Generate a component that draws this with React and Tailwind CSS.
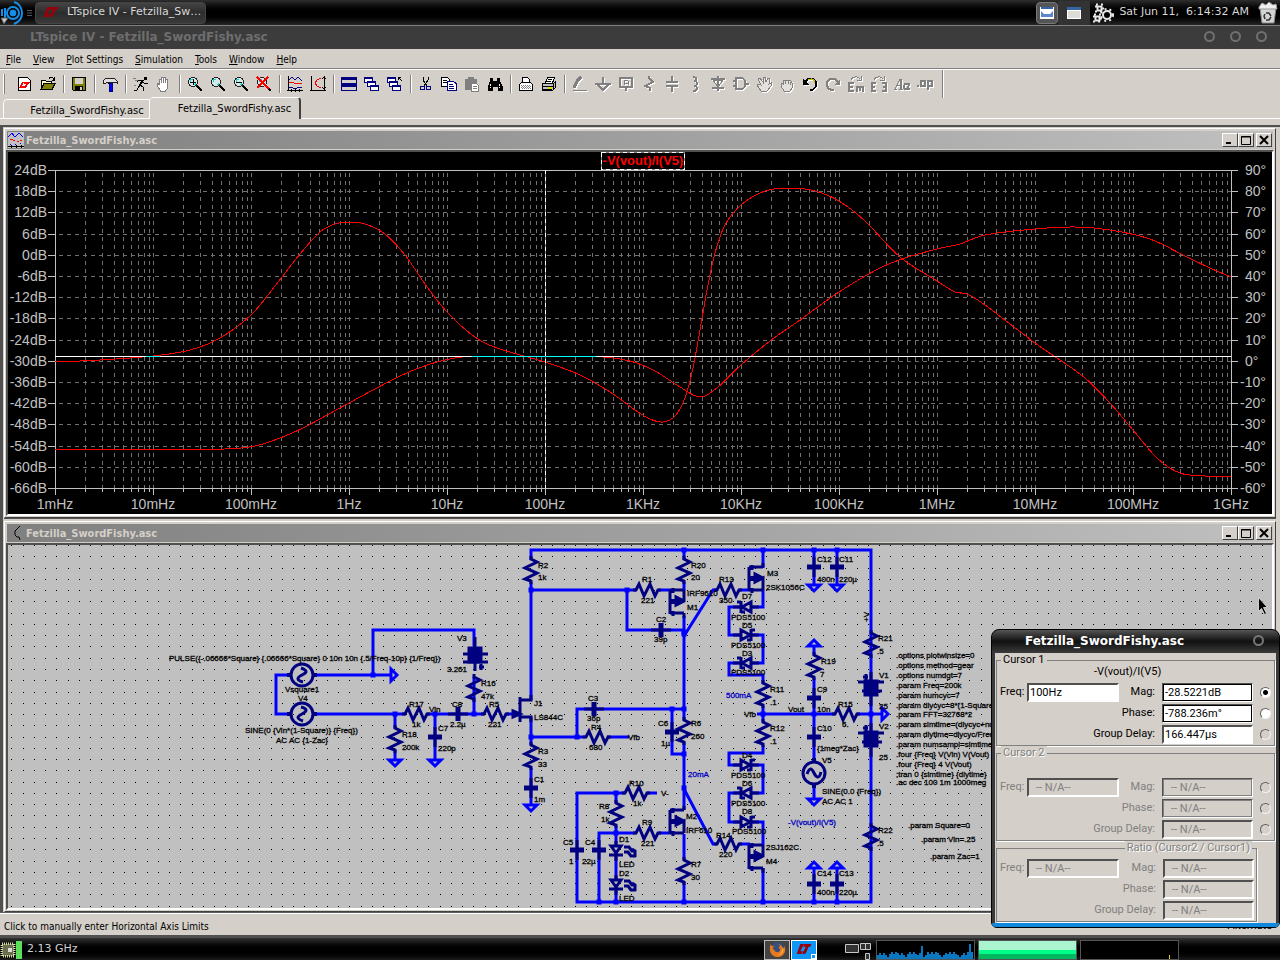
import { Fragment } from 'react';

const NAVY = '#000080';
const BLUE = '#0000ff';

/* ---------- toolbar icons ---------- */

const Magnifier = ({ children }) => (
  <>
    <circle cx="6" cy="6" r="4.5" fill="#d8e8e4" stroke="#202020" />
    <path d="M3 6a3 3 0 0 1 3-3M9 7a3 3 0 0 1-2 2" stroke="#00d8d8" />
    <path d="M10 10l5 5" stroke="#000" strokeWidth="2" />
    {children}
  </>
);

const SmallWindow = ({ x, y }) => (
  <>
    <rect x={x + 0.5} y={y + 0.5} width="8" height="5" fill="#fff" stroke={NAVY} />
    <path d={`M${x} ${y + 1}h9`} stroke={NAVY} strokeWidth="2" />
  </>
);

const icons = {
  'New schematic': (
    <>
      <path d="M1.500 1.500h9l3 3v10h-12z" fill="#fff" stroke="#000" />
      <path d="M5 6h2l-2 4h2l-1 2H2zM7 6h6l-1 2h-1l-2 4H6l3-4H7z" fill="#f00" />
    </>
  ),
  Open: (
    <>
      <path d="M1 13V4h4l1 1h5v3" fill="#ffffc0" stroke="#000" />
      <path d="M1 13.500l3-6h11l-3 6z" fill="#808000" stroke="#000" />
      <path d="M9 2.500c2-2 4-1 5 1M14.500 1v3h-3" stroke="#000" />
    </>
  ),
  Save: (
    <>
      <path d="M1.500 1.500h13v13h-12l-1-1z" fill="#808000" stroke="#000" />
      <rect x="4" y="2" width="8" height="6" fill="#d4cfc8" />
      <rect x="4" y="10" width="8" height="5" fill="#000" />
      <rect x="9" y="11" width="2" height="3" fill="#d4cfc8" />
    </>
  ),
  'Control panel': (
    <>
      <path d="M6 6h4v2H6z" fill="#000" />
      <path d="M1 5l3-3h8l3 3v2l-3-1H5L3 8 1 7z" fill="#e0e0e0" stroke="#202020" />
      <path d="M7 7h3v8H7z" fill="#00f" stroke={NAVY} />
    </>
  ),
  Run: (
    <>
      <path d="M11 1h3v3h-3z" fill="#000" />
      <path d="M11 4L7 9l3 2v4M7 9l-3 5H1M10 4H6L4 6M10 6l2 2 3-1" stroke="#000" />
      <path d="M10 4L7 9" stroke="#000" strokeWidth="2" />
      <path d="M0 2h3M2 4h3M1 9h2" stroke="#808080" />
    </>
  ),
  Halt: (
    <path d="M4.500 15L1.500 10V7.500l2 1V3h2v4V1.500h2V7 1.500h2V7 3h2v9l-2 3z" fill="#fff" stroke="#808080" />
  ),
  'Zoom in': <Magnifier><path d="M3 6h6M6 3v6" stroke="#000" /></Magnifier>,
  Pan: <Magnifier />,
  'Zoom out': <Magnifier><path d="M3 6h6" stroke="#000" /></Magnifier>,
  'Zoom full extents': <Magnifier><path d="M1 1l12 12M12 1L1 12" stroke="#f00" strokeWidth="2" /></Magnifier>,
  Autorange: (
    <>
      <path d="M1.500 0v15M0 14.500h16M4 13v3M8 13v3M12 13v3" stroke="#000" />
      <path d="M2 4l3-3 3 3 3-3 4 4M2 11l4 1h4l5-1" stroke={NAVY} />
      <path d="M2 7l3-1 4 2 3-1 3 1" stroke="#f00" />
    </>
  ),
  'Fit vertical': (
    <>
      <path d="M1.500 0v15M0 14.500h16M14.500 1v12M12 3l2.500-2 1.500 2M12 11l2.500 2 1.500-2" stroke="#000" />
      <path d="M11 2L7 4 5 7l2 3 4 2" stroke="#f00" />
    </>
  ),
  'Tile windows': (
    <>
      <rect x="0.500" y="1.500" width="15" height="6" fill="#d4cfc8" stroke={NAVY} />
      <rect x="0.500" y="8.500" width="15" height="6" fill="#d4cfc8" stroke={NAVY} />
      <path d="M0 2.500h16M0 9.500h16" stroke={NAVY} strokeWidth="3" />
    </>
  ),
  Cascade: (
    <>
      <SmallWindow x={0} y={1} />
      <SmallWindow x={3} y={5} />
      <SmallWindow x={6} y={9} />
    </>
  ),
  'Close all': (
    <>
      <SmallWindow x={0} y={1} />
      <SmallWindow x={2} y={5} />
      <SmallWindow x={5} y={9} />
      <path d="M15 5l-4-4M11 4V1h3" stroke="#000" />
    </>
  ),
  Cut: (
    <>
      <path d="M5 1v3l4 6M10 1v3l-4 6" stroke="#000" />
      <circle cx="4.500" cy="12" r="2" stroke={NAVY} />
      <circle cx="10.500" cy="12" r="2" stroke={NAVY} />
    </>
  ),
  Copy: (
    <>
      <path d="M0.500 1.500h6l2 2v7h-8z" fill="#fff" stroke="#000" />
      <path d="M2 4.500h4M2 6.500h4" stroke="#000" />
      <path d="M6.500 5.500h6l2.500 2v7h-8.500z" fill="#fff" stroke={NAVY} />
      <path d="M8 8.500h4M8 10.500h5M8 12.500h5" stroke={NAVY} />
    </>
  ),
  Paste: (
    <>
      <path d="M1 3h12v11H1z" fill="#808080" />
      <path d="M4 1h6v3H4z" fill="#808080" />
      <path d="M7.500 7.500h5l2 2v6h-7z" fill="#fff" stroke="#808080" />
      <path d="M9 10.500h4M9 12.500h4" stroke="#808080" />
    </>
  ),
  Find: (
    <>
      <path d="M3 2h3v3h4V2h3v3l3 6v4h-5v-4H6v4H1v-4l2-6z" fill="#000" />
      <path d="M3.500 8v4M12.500 8v4" stroke="#fff" strokeDasharray="2 1" />
    </>
  ),
  'Print preview': (
    <>
      <path d="M4.500 7V1.500h5l2 2V7" fill="#fff" stroke="#000" />
      <path d="M1.500 14.500v-6l2-2h9l2 2v6z" fill="#fff" stroke="#000" />
      <path d="M3 9.500h10M4 10.500h9M3 11.500h10M4 12.500h9" stroke="#808080" strokeDasharray="1 1" />
    </>
  ),
  Print: (
    <>
      <path d="M4.500 7l2-5.500h7L11.500 7" fill="#fff" stroke="#000" />
      <path d="M7 3.500h4M6 5.500h4" stroke="#000" />
      <path d="M1.500 7.500h11l2-2v6l-3 3h-10z" fill="#c0c0c0" stroke="#000" />
      <path d="M2 10.500h10M12.500 8v6M2 13.500h9" stroke="#000" />
      <path d="M7 12h4" stroke="#e0e000" strokeWidth="2" />
    </>
  ),
  Wire: (
    <>
      <path d="M2 12L5 5l4-4" stroke="currentColor" strokeWidth="3" />
      <path d="M1 14.500h14" stroke="currentColor" />
    </>
  ),
  Ground: <path d="M8 1v6M0 7.500h16M2 8l6 6 6-6" stroke="currentColor" strokeWidth="2" />,
  'Label net': (
    <>
      <path d="M2 1.500h12v9H2zM8 11v4" stroke="currentColor" strokeWidth="2" />
      <path d="M6 9V5l1-1h2l1 1v4M6 7h4" stroke="currentColor" />
    </>
  ),
  Resistor: <path d="M8 0v2l4 4-8 4 5 2v3" stroke="currentColor" strokeWidth="2" />,
  Capacitor: <path d="M8 0v6M2 6h12M2 10h12M8 10v6" stroke="currentColor" strokeWidth="2" />,
  Inductor: <path d="M6 1c4 0 4 4 1 4 4 0 4 5 0 5 4 0 4 5-1 5" stroke="currentColor" strokeWidth="2" />,
  Diode: (
    <>
      <path d="M1 3h14M2 12h12M8 0v15" stroke="currentColor" strokeWidth="2" />
      <path d="M3 4h10l-5 7z" stroke="currentColor" />
    </>
  ),
  Component: <path d="M0 5h3M0 10h3M3 2h5c6 0 6 11 0 11H3zM12 8h4" stroke="currentColor" strokeWidth="2" />,
  Move: <path d="M5 15L1 9l2-1 2 1-3-6 2-1 3 4V1h2l1 5 2-4 2 1-1 5 2-1v3l-4 5z" fill="#e4e1dc" stroke="currentColor" />,
  Drag: <path d="M5 15L2 10V7l2 1V5l3-1 2 0 3 1 1 2v5l-2 3z M6 5v3M9 5v3M11 6v3" fill="#e4e1dc" stroke="currentColor" />,
  Undo: (
    <>
      <path d="M3 6c3-5 11-4 11 2 0 4-3 6-6 6" stroke="#000" strokeWidth="2" />
      <path d="M6 4c3-2 7-1 7 3" stroke="#c0c000" />
      <path d="M1 3v6h6z" fill="#000" />
    </>
  ),
  Redo: (
    <>
      <path d="M13 6C10 1 2 2 2 8c0 4 3 6 7 6" stroke="currentColor" strokeWidth="2" />
      <path d="M15 3v6H9z" fill="currentColor" />
    </>
  ),
  Rotate: (
    <>
      <path d="M3 4c2-4 7-4 9-1M13 0v4H9" stroke="currentColor" />
      <path d="M6 7H1v8h5M1 11h4M9 16v-5h6v5M12 11v4" stroke="currentColor" strokeWidth="2" />
    </>
  ),
  Mirror: (
    <>
      <path d="M3 4c2-4 7-4 9-1M13 0v4H9" stroke="currentColor" />
      <path d="M5 7H1v8h4M1 11h3M11 7h4v8h-4M15 11h-3" stroke="currentColor" strokeWidth="2" />
    </>
  ),
  Text: (
    <>
      <path d="M0 13.500h3M1 13L6 3h1v10M3 9.500h4M5 13.500h4" stroke="currentColor" />
      <path d="M7 3v10" stroke="currentColor" strokeWidth="2" />
      <path d="M15 7l-1 6h2M14 8c-3-1-4 1-4 3s2 3 4 1" stroke="currentColor" strokeWidth="2" />
    </>
  ),
  'SPICE directive': <path d="M0 10h2M4 5h4v5H4zM11 14V5h4v5h-4" stroke="currentColor" strokeWidth="2" />,
};

const toolGroups = [
  ['New schematic', 'Open'],
  ['Save'],
  ['Control panel'],
  ['Run', 'Halt'],
  ['Zoom in', 'Pan', 'Zoom out', 'Zoom full extents'],
  ['Autorange', 'Fit vertical'],
  ['Tile windows', 'Cascade', 'Close all'],
  ['Cut', 'Copy', 'Paste', 'Find'],
  ['Print preview', 'Print'],
  ['Wire', 'Ground', 'Label net', 'Resistor', 'Capacitor', 'Inductor', 'Diode', 'Component', 'Move', 'Drag', 'Undo', 'Redo', 'Rotate', 'Mirror', 'Text', 'SPICE directive'],
];

const Toolbar = () => (
  <div className="flex h-7 items-center border-t border-white pl-1">
    <span className="mr-2 h-5 w-px bg-[#808080] shadow-[-1px_0_0_#fff]" />
    {toolGroups.map((group, i) => (
      <Fragment key={i}>
        {i > 0 && (
          <span className="flex w-2 justify-center">
            <span className="h-[18px] w-px bg-[#808080] shadow-[1px_0_0_#fff]" />
          </span>
        )}
        {group.map((name) => (
          <button key={name} aria-label={name} className="flex w-[23px] justify-center pl-px text-[#808080]">
            <svg
              viewBox="0 0 16 16"
              className={`size-4 ${i === 9 ? 'drop-shadow-[1px_1px_0_#fff]' : ''}`}
              fill="none"
              shapeRendering="crispEdges"
            >
              {icons[name]}
            </svg>
          </button>
        ))}
      </Fragment>
    ))}
    <span className="ml-[6px] h-7 w-px bg-[#808080] shadow-[1px_0_0_#fff]" />
  </div>
);

/* ---------- desktop panels ---------- */

const LtLogo = ({ className }) => (
  <svg viewBox="0 0 16 12" className={className} fill="#990008">
    <path d="M4 0h4L4 8h3l-2 3H0z" />
    <path d="M8 0h8l-1 3h-2l-3 7-2 1H6l4-8H7z" />
  </svg>
);

const TopPanel = () => (
  <header className="flex h-[25px] items-center bg-linear-to-b from-[#2e2e2e] via-black to-[#262626] font-['DejaVu_Sans',sans-serif] text-[11px] text-[#d8d8d8]">
    <button aria-label="Main menu" className="w-6">
      <svg viewBox="0 0 24 24" className="size-6" fill="none" stroke="#1590e8">
        <circle cx="13" cy="12" r="3" fill="#1590e8" />
        <circle cx="13" cy="12" r="6" strokeWidth="2" />
        <path d="M2 8v7M5 7v10M14 1c5 1 8 6 8 11s-3 9-8 11" strokeWidth="2" />
        <path d="M1 17h7l-4 6z" fill="#c8c8c8" stroke="#555" />
      </svg>
    </button>
    <svg viewBox="0 0 6 8" className="ml-[3px] h-2 w-[5px]" stroke="#666"><path d="M0 1h6M0 4h6M0 7h6" /></svg>
    <button className="ml-[3px] flex h-[22px] w-[171px] items-center rounded-sm border border-[#444] bg-linear-to-b from-[#444] via-[#2c2c2c] to-[#3a3a3a] pl-[7px]">
      <LtLogo className="mr-2 h-[11px] w-4" />
      LTspice IV - Fetzilla_Sw…
    </button>
    <div className="ml-auto flex items-center">
      <button aria-label="Desktop 1" className="flex h-[22px] w-[22px] items-center justify-center rounded-sm border border-[#777] bg-[#555]">
        <svg viewBox="0 0 14 12" className="h-3 w-[14px]"><path d="M0 0h14v12H0z" fill="#fff" /><path d="M1 0h12v2H1z" fill="#3465a4" /><path d="M1 4l3 3h6l3-3v6H1z" fill="#5a88c8" /></svg>
      </button>
      <button aria-label="Desktop 2" className="flex h-6 w-8 items-center justify-center bg-[#333]">
        <svg viewBox="0 0 14 12" className="h-3 w-[14px]"><path d="M0 0h14v12H0z" fill="#fff" /><path d="M0 0h14v3H0z" fill="#3465a4" /><path d="M1 4h12v7H1z" fill="#dcdcd8" /></svg>
      </button>
      <svg viewBox="0 0 22 20" className="ml-[3px] h-5 w-[22px]" fill="none" stroke="#e8e8e8">
        <circle cx="14" cy="12" r="4" strokeWidth="2" />
        <circle cx="14" cy="12" r="6" strokeWidth="2" strokeDasharray="2 3" />
        <path d="M4.500 3.500h4v4h-4zM2.500 13.500h4v4h-4z" strokeWidth="2" />
        <path d="M3 1.500h7v7H3zM1 11.500h7v7H1z" strokeWidth="2" strokeDasharray="2 3" />
      </svg>
      <time className="ml-[4px] whitespace-pre">Sat Jun 11,  6:14:32 AM</time>
      <svg viewBox="0 0 20 22" className="mr-[2px] ml-[9px] h-[22px] w-5">
        <path d="M2 6l2 15h12l2-15z" fill="#d4d4d4" stroke="#888" />
        <path d="M1 5l3-4 4 2 3-3 4 3 3-1 1 5H1z" fill="#eee" stroke="#999" />
        <path d="M8 11h3l2 3M13 15l-2 3H8M7 17l-1-3 1-2" fill="none" stroke="#333" strokeWidth="1.500" />
      </svg>
    </div>
  </header>
);

const cpuLoad = Array.from({ length: 48 }, (_, i) => (i === 22 ? 13 : i === 46 ? 15 : i % 9 === 5 ? 2 : 4 + ((i * 7 + (i % 5) * 3) % 4)));

const BottomPanel = () => (
  <footer className="flex h-6 items-center bg-linear-to-b from-[#333] via-black to-[#262626] font-['DejaVu_Sans',sans-serif] text-[11px] text-[#d0d0d0]">
    <svg viewBox="0 0 24 20" className="mr-[3px] h-5 w-6">
      <path d="M2 4h12v12H2z" fill="#6f7350" stroke="#d8d8a0" strokeWidth="3" strokeDasharray="1 1" />
      <path d="M3 5h10v10H3z" fill="#6a6e50" />
      <path d="M8 8h4v4H8z" fill="#ddd" />
      <path d="M16 1h6v18h-6z" fill="#5ae05a" />
    </svg>
    2.13 GHz
    <div className="ml-auto flex items-center">
      <button aria-label="Firefox" className="flex h-5 w-[26px] items-center justify-center border border-[#bbb] bg-[#444]">
        <svg viewBox="0 0 18 18" className="size-[17px]">
          <circle cx="9" cy="8" r="7" fill="#35507a" />
          <path d="M2 3c-3 6 0 14 7 14s10-7 7-12c0 3-1 3-1 3-1-3-3-4-5-5 2 2 2 3 0 4l2 2c0 3-5 4-6 1L4 8c0-2 1-2 2-2-2-1-4 0-4-3z" fill="#e87820" />
          <path d="M15 7c1 5-2 8-6 8 5-1 4-4 6-8z" fill="#ffc040" />
        </svg>
      </button>
      <button aria-label="LTspice" className="ml-px flex h-5 w-[26px] items-end border border-white bg-[#0e96f8] pl-1">
        <LtLogo className="mb-1 h-[11px] w-4" />
        <span className="-ml-px size-[5px] border border-white" />
      </button>
      <svg viewBox="0 0 54 20" className="mr-[5px] h-5 w-[54px]" fill="#333" stroke="#c8c8c8">
        <path d="M28.500 4.500h13v8h-13zM43.500 3.500h10v6h-10zM48.500 3.500v6M48.500 13.500h4v6h-4z" />
      </svg>
      <svg viewBox="0 0 97 18" className="h-5 w-[99px] border border-[#555] bg-black" shapeRendering="crispEdges">
        {cpuLoad.map((h, i) => (
          <path key={i} d={`M${i * 2 + 1} 18v-${h}`} stroke="#0a78c0" strokeWidth="2" />
        ))}
      </svg>
      <div className="ml-[3px] flex h-5 w-[99px] flex-col border border-[#555]">
        <span className="flex-2 bg-[#aaf5d0]" />
        <span className="flex-1 bg-[#00ff88]" />
        <span className="flex-1 bg-[#00b860]" />
      </div>
      <div className="mr-[101px] ml-[3px] flex h-5 w-[99px] items-end justify-end border border-[#555] bg-black pr-2">
        <span className="h-1 w-px bg-[#e8d020]" />
      </div>
    </div>
  </footer>
);

/* ---------- waveform plot ---------- */

const phase = [[55, 362], [100, 360], [153, 356], [190, 350], [220, 338], [251, 315], [275, 286], [300, 254], [320, 232], [335, 224], [349, 222], [365, 224], [385, 234], [405, 255], [425, 284], [447, 312], [475, 337], [500, 349], [545, 362], [580, 375], [610, 392], [635, 410], [650, 419], [663, 422], [675, 416], [685, 398], [693, 368], [700, 330], [707, 290], [715, 253], [725, 225], [741, 205], [765, 191], [790, 188], [815, 191], [839, 201], [865, 221], [900, 257], [937, 281], [955, 292], [967, 294], [985, 305], [1035, 343], [1060, 360], [1085, 378], [1110, 403], [1133, 430], [1158, 459], [1180, 473], [1205, 476], [1231, 476]];
const magnitude = [[55, 449.5], [140, 449.5], [225, 449], [255, 446], [280, 438], [305, 427], [349, 403], [400, 376], [430, 364], [455, 358], [475, 356.5], [545, 356.5], [596, 356.5], [630, 361], [655, 371], [680, 387], [700, 397], [718, 387], [741, 365], [770, 341], [800, 320], [839, 292], [880, 268], [905, 258], [937, 249], [960, 244], [985, 235], [1035, 229], [1075, 227], [1110, 230], [1150, 239], [1185, 256], [1210, 268], [1231, 277]];

// Catmull-Rom through the points, written as cubic segments
function smooth(pts) {
  let d = `M${pts[0]}`;
  for (let i = 0; i < pts.length - 1; i++) {
    const p0 = pts[i - 1] || pts[i];
    const [p1, p2] = [pts[i], pts[i + 1]];
    const p3 = pts[i + 2] || p2;
    d += `C${p1[0] + (p2[0] - p0[0]) / 6} ${p1[1] + (p2[1] - p0[1]) / 6} ${p2[0] - (p3[0] - p1[0]) / 6} ${p2[1] - (p3[1] - p1[1]) / 6} ${p2}`;
  }
  return d;
}

const decades = ['1mHz', '10mHz', '100mHz', '1Hz', '10Hz', '100Hz', '1KHz', '10KHz', '100KHz', '1MHz', '10MHz', '100MHz', '1GHz'];
const rowY = (i) => Math.round(170 + i * 21.2);

const Plot = () => (
  <svg viewBox="8 152 1264 362" className="block w-full bg-black font-['Liberation_Sans',sans-serif] text-[14px]" fill="#c0c0c0">
    <g fill="none" stroke="#707070" strokeDasharray="4 4" shapeRendering="crispEdges">
      {decades.slice(0, 12).map((_, d) =>
        [2, 3, 4, 5, 6, 7, 8, 9, 10].map((m) => {
          const x = Math.round(55 + 98 * (d + Math.log10(m))) + 0.5;
          return <path key={d + '-' + m} d={`M${x} 173V488`} />;
        })
      )}
      {Array.from({ length: 14 }, (_, i) => <path key={i} d={`M59 ${rowY(i + 1) + 0.5}H1231`} />)}
    </g>
    <g fill="none" stroke="#c0c0c0" shapeRendering="crispEdges">
      <path d="M48 170.500H1238M48 488.500H1238M55.500 170V495M1231.500 170V495" />
      {Array.from({ length: 14 }, (_, i) => <path key={i} d={`M48 ${rowY(i + 1) + 0.5}h7M1231 ${rowY(i + 1) + 0.5}h7`} />)}
      {decades.slice(0, 12).map((_, d) =>
        [2, 3, 4, 5, 6, 7, 8, 9, 10].map((m) => (
          <path key={d + '-' + m} d={`M${Math.round(55 + 98 * (d + Math.log10(m))) + 0.5} 488v${m === 10 ? 7 : 4}`} />
        ))
      )}
    </g>
    <g fill="none" stroke="#f00" shapeRendering="crispEdges">
      <path d={smooth(phase)} />
      <path d={smooth(magnitude)} />
    </g>
    <g fill="none" shapeRendering="crispEdges">
      <path d="M55 356.500H1231" stroke="#fff" />
      <path d="M146 356.500H160" stroke="#00ffff" />
      <path d="M472 356.500H596" stroke="#00ffff" />
      <path d="M545.500 170V488" stroke="#808080" />
      <path d="M545.500 170V488" stroke="#fff" strokeDasharray="4 3" />
      <rect x="601.500" y="152.500" width="83" height="17" stroke="#808080" />
      <rect x="601.500" y="152.500" width="83" height="17" stroke="#fff" strokeDasharray="4 3" />
    </g>
    <text x="643" y="165" textAnchor="middle" fill="#f00" className="text-[13px] font-bold">-V(vout)/I(V5)</text>
    {Array.from({ length: 16 }, (_, i) => (
      <Fragment key={i}>
        <text x="47" y={rowY(i) + 5} textAnchor="end">{24 - 6 * i}dB</text>
        <text x={i < 10 ? 1245 : 1240} y={rowY(i) + 5}>{90 - 10 * i}°</text>
      </Fragment>
    ))}
    {decades.map((label, i) => (
      <text key={label} x={55 + 98 * i} y="509" textAnchor="middle">{label}</text>
    ))}
  </svg>
);

/* ---------- schematic ---------- */

let dots = '';
for (let r = 0; r < 33; r++) {
  for (let c = 0; c < 113; c++) {
    dots += `M${Math.round(11.3 + c * 11.27)} ${Math.round(545 + r * 11.27)}h1v1h-1z`;
  }
}

const ResV = ({ x, y }) => <path d={`M${x} ${y - 3}v3l6 3l-12 6l12 5l-12 6l6 2v3`} />;
const ResH = ({ x, y }) => <path d={`M${x - 3} ${y}h3l3 -6l5 12l6 -12l5 12l3 -6h3`} />;
const Cap = ({ x, y, turn }) => (
  <path d={turn ? `M${x - 10} ${y}h20M${x - 1} ${y - 7}v14M${x + 1} ${y - 7}v14` : `M${x} ${y - 10}v20M${x - 7} ${y - 1}h14M${x - 7} ${y + 1}h14`} />
);
const Gnd = ({ x, y, r = 0 }) => <path transform={`rotate(${r} ${x} ${y})`} stroke={BLUE} d={`M${x - 6} ${y}h12l-6 6z`} />;
const Battery = ({ x, y, plus }) => (
  <>
    <rect x={x - 6} y={y - 7} width="12" height="14" fill={NAVY} />
    <path d={plus > 0 ? `M${x - 12} ${y - 1}h25M${x - 12} ${y + 7}h25M${x} ${y - 18}v34M${x + 6} ${y + 9}v6M${x + 4} ${y + 12}h5` : `M${x - 13} ${y - 6}h26M${x - 9} ${y + 3}h20M${x} ${y - 16}v34M${x - 5} ${y - 14}v6M${x - 8} ${y - 11}h5`} />
  </>
);
const Source = ({ x, y, r = 0 }) => (
  <g transform={`rotate(${r} ${x} ${y})`}>
    <circle cx={x} cy={y} r="11" />
    <path d={`M${x - 7} ${y + 1}c3 -8 5 -5 7 -1s5 7 7 -1`} />
    <path d={`M${x} ${y - 15}v4M${x} ${y + 11}v4`} strokeWidth="4" />
  </g>
);
const Schottky = ({ x, y, d }) => (
  <path
    fill="#c0c0c0"
    d={`M${x - 13} ${y}h8M${x + 5} ${y}h8M${x - 5 * d} ${y - 5}v10L${x + 4 * d} ${y}zM${x + 5 * d} ${y - 6}v12M${x + 5 * d} ${y - 5}h${4 * d}M${x + 5 * d} ${y + 5}h${-4 * d}`}
  />
);
const Led = ({ x, y }) => (
  <>
    <path fill="#c0c0c0" d={`M${x} ${y - 9}v5M${x} ${y + 4}v7M${x - 5} ${y - 4}h10l-5 7zM${x - 7} ${y + 5}h14`} />
    <path d={`M${x + 8} ${y - 3}h5l3 4h4M${x + 8} ${y + 2}h4l3 4M${x + 16} ${y - 1}l4 3M${x + 14} ${y + 6}h6M${x + 19} ${y + 1}v6`} />
  </>
);
// gate column at x, drain/source column at x + 14; `top` puts the source at the top end
const Mosfet = ({ x, y, top }) => (
  <path
    d={`M${x} ${y}v24M${x + 3} ${y - 2}v5M${x + 3} ${y + 9}v5M${x + 3} ${y + 21}v5M${x} ${y}h14M${x} ${y + 23}h14M${x + 3} ${y + 11}h11l-8 -4v8l8 -4${top ? `v-11M${x + 14} ${y + 23}v5` : `v12M${x + 14} ${y - 4}v4`}`}
  />
);

const wires = [
  'M531 560V550H871V902H577V793H625M531 582V700M531 590H636M627 590V630H684M474 646V630H373V675M291 675H276V714H291',
  'M313 675H391M313 714H405M395 714V728M395 750V760M427 714H484M435 714V760M474 677V714M506 714H520M531 717V745M531 768V805',
  'M531 737H585M577 737V709H684M607 737H629M672 709V754H684M684 550V560M684 582V590M684 616V720M684 742V810M684 834V860M684 882V902',
  'M684 636L713 590H717M739 590H750M684 789L713 844H717M739 844H750M659 590H670M763 550V568M763 590V607H729V635H763V663H729V675H763V684M763 706V722',
  'M763 745V753H729V765H763V793H729V822H763V845M763 868V902M757 714H835M857 714H882M814 550V584M837 550V584M814 646V655M814 678V761M814 785V799',
  'M814 868V902M837 868V902M599 902V833H636M659 833H670M616 793V803M616 826V902M647 793H657',
];

const junctions = [[531, 590], [627, 590], [684, 550], [763, 550], [814, 550], [837, 550], [373, 675], [395, 714], [435, 714], [474, 714], [531, 737], [577, 737], [672, 709], [684, 709], [684, 632], [684, 634], [684, 754], [684, 788], [763, 714], [814, 714], [871, 714], [616, 793], [616, 833], [599, 902], [616, 902], [684, 902], [763, 902], [814, 902], [837, 902]];

const labels = [
  [169, 661, 'PULSE({-.06666*Square} {.06666*Square} 0 10n 10n {.5/Freq-10p} {1/Freq})'],
  [285, 692, 'Vsquare1'], [298, 701, 'V4'], [245, 733, 'SINE(0 {Vin*(1-Square)} {Freq})'], [276, 743, 'AC AC {1-Zac}'],
  [457, 641, 'V3'], [447, 672, '3.261'], [481, 686, 'R16'], [481, 699, '47k'], [409, 707, 'R17'], [412, 727, '1k'], [429, 712, 'Vin'],
  [452, 707, 'C8'], [450, 727, '2.2µ'], [489, 707, 'R5'], [488, 727, '221'], [402, 737, 'R18'], [402, 750, '200k'], [438, 731, 'C7'], [438, 751, '220p'],
  [534, 706, 'J1'], [534, 720, 'LS844C'], [538, 568, 'R2'], [538, 580, '1k'], [538, 754, 'R3'], [538, 767, '33'], [534, 782, 'C1'], [534, 802, '1m'],
  [642, 582, 'R1'], [641, 603, '221'], [656, 622, 'C2'], [654, 642, '39p'], [691, 568, 'R20'], [691, 580, '20'], [687, 596, 'IRF9610'], [687, 610, 'M1'],
  [719, 582, 'R13'], [719, 603, '350'], [767, 576, 'M3'], [766, 590, '2SK1056C'],
  [588, 701, 'C3'], [587, 721, '36p'], [591, 730, 'R4'], [589, 750, '680'], [628, 740, 'Vfb'], [658, 726, 'C6'], [661, 746, '1µ'], [691, 726, 'R6'], [691, 739, '260'],
  [742, 599, 'D7'], [731, 620, 'PDS5100'], [742, 628, 'D5'], [731, 648, 'PDS5100'], [742, 656, 'D3'], [731, 675, 'PDS5100'],
  [770, 692, 'R11'], [770, 705, '.1'], [770, 731, 'R12'], [770, 744, '.1'], [744, 717, 'Vfb'], [788, 712, 'Vout'],
  [742, 758, 'D4'], [731, 778, 'PDS5100'], [742, 786, 'D6'], [731, 806, 'PDS5100'], [742, 814, 'D8'], [732, 834, 'PDS5100'],
  [629, 786, 'R10'], [633, 806, '1k'], [661, 796, 'V-'], [599, 809, 'R8'], [601, 822, '1k'], [642, 825, 'R9'], [641, 846, '221'],
  [619, 842, 'D1'], [619, 867, 'LED'], [619, 876, 'D2'], [619, 901, 'LED'], [563, 845, 'C5'], [569, 864, '1'], [585, 845, 'C4'], [582, 864, '22µ'],
  [686, 819, 'M2'], [686, 833, 'IRF610'], [691, 867, 'R7'], [691, 880, '30'], [716, 838, 'R14'], [719, 857, '220'], [766, 850, '2SJ162C'], [766, 864, 'M4'],
  [817, 562, 'C12'], [817, 582, '400n'], [839, 562, 'C11'], [839, 582, '220µ'], [821, 664, 'R19'], [820, 677, '7'], [817, 692, 'C9'], [817, 712, '10n'],
  [838, 707, 'R15'], [842, 727, '6.'], [878, 641, 'R21'], [877, 654, '.5'], [879, 678, 'V1'], [879, 709, '25'], [879, 729, 'V2'], [879, 760, '25'],
  [817, 731, 'C10'], [817, 751, '{1meg*Zac}'], [822, 763, 'V5'], [822, 794, 'SINE(0.0 {Freq})'], [822, 804, 'AC AC 1'],
  [878, 833, 'R22'], [877, 846, '.5'], [817, 876, 'C14'], [817, 895, '400n'], [839, 876, 'C13'], [839, 895, '220µ'],
  [908, 828, '.param Square=0'], [921, 842, '.param Vin=.25'], [930, 859, '.param Zac=1'],
];

const directives = ['.options plotwinsize=0', '.options method=gear', '.options numdgt=7', '.param Freq=200k', '.param numcyc=7', '.param dlycyc=8*(1-Square)', '.param FFT=32768*2', '.param simtime=(dlycyc+numcyc)', '.param dlytime=dlycyc/Freq', '.param numsampl=simtime*FFT', '.four {Freq} V(Vin) V(Vout)', '.four {Freq} 4 V(Vout)', ';tran 0 {simtime} {dlytime}', '.ac dec 100 1m 1000meg'];

const Schematic = () => (
  <svg viewBox="8 545 1264 363" className="block w-full bg-[#c0c0c0] font-['Liberation_Sans',sans-serif] text-[8px]">
    <path d={dots} fill="#000" shapeRendering="crispEdges" />
    <g fill="none" stroke={BLUE} strokeWidth="3">
      {wires.map((d) => <path key={d} d={d} />)}
      {junctions.map(([x, y], i) => <rect key={i} x={x - 1} y={y - 1} width="2" height="2" />)}
    </g>
    <g fill="none" stroke={NAVY} strokeWidth="3">
      {[[531, 559], [474, 677], [395, 728], [531, 745], [684, 559], [763, 683], [763, 722], [684, 720], [684, 860], [616, 803], [871, 633], [871, 826], [814, 655]].map(([x, y]) => <ResV key={`${x}-${y}`} x={x} y={y} />)}
      {[[405, 714], [484, 714], [636, 590], [717, 590], [586, 737], [625, 793], [636, 833], [717, 844], [835, 714]].map(([x, y]) => <ResH key={`${x}-${y}`} x={x} y={y} />)}
      {[[435, 737], [531, 788], [672, 732], [577, 850], [599, 850], [814, 567], [837, 567], [814, 698], [814, 737], [814, 884], [837, 884]].map(([x, y]) => <Cap key={`${x}-${y}`} x={x} y={y} />)}
      {[[458, 714], [661, 630], [594, 709]].map(([x, y]) => <Cap key={`${x}-${y}`} x={x} y={y} turn />)}
      {[[395, 760], [435, 760], [531, 805], [814, 585], [837, 585], [814, 799]].map(([x, y]) => <Gnd key={`${x}-${y}`} x={x} y={y} />)}
      {[[814, 646], [814, 868], [837, 868]].map(([x, y]) => <Gnd key={`${x}-${y}`} x={x} y={y} r={180} />)}
      {[[391, 675], [882, 714]].map(([x, y]) => <Gnd key={`${x}-${y}`} x={x} y={y} r={-90} />)}
      {[[607, -1], [635, 1], [663, -1], [765, 1], [793, -1], [822, 1]].map(([y, d]) => <Schottky key={y} x={746} y={y} d={d} />)}
      <Battery x={475} y={655} plus={1} />
      <Battery x={871} y={688} plus={-1} />
      <Battery x={871} y={739} plus={-1} />
      <Source x={302} y={675} r={90} />
      <Source x={302} y={714} r={-90} />
      <Source x={814} y={773} />
      <Led x={616} y={850} />
      <Led x={616} y={884} />
      <Mosfet x={670} y={590} top />
      <Mosfet x={749} y={567} />
      <Mosfet x={670} y={810} />
      <Mosfet x={749} y={845} top />
      <path d="M531 695V700H520M520 697V722M531 722V717H520M513 711l7 3l-7 3z" />
    </g>
    <g fill="#000" stroke="#000" strokeWidth="0.3">
      {labels.map(([x, y, t]) => <text key={`${x}-${y}`} x={x} y={y}>{t}</text>)}
      {directives.map((t, i) => <text key={t} x="896" y={i < 13 ? 658 + Math.round(i * 9.9) : 785}>{t}</text>)}
      <text transform="translate(869 622) rotate(-90)">+V</text>
    </g>
    <g fill="#0000c0" stroke="#0000c0" strokeWidth="0.3">
      <text x="726" y="698">500mA</text>
      <text x="688" y="777">20mA</text>
      <text x="788" y="825">-V(vout)/I(V5)</text>
    </g>
  </svg>
);

/* ---------- windows ---------- */

const CaptionButton = ({ label, children, className = '' }) => (
  <button aria-label={label} className={`flex h-[14px] w-4 items-center justify-center border border-t-white border-r-[#404040] border-b-[#404040] border-l-white bg-[#d4cfc8] ${className}`}>
    <svg viewBox="0 0 12 10" className="h-[10px] w-3" fill="none" stroke="#000">{children}</svg>
  </button>
);

const ChildWindow = ({ icon, children }) => (
  <section className="border border-t-white border-r-[#404040] border-b-[#404040] border-l-white bg-[#d4cfc8] px-px pt-[2px] pb-px">
    <div className="mx-px mb-px flex h-[18px] items-center bg-linear-to-r from-[#808080] to-[#c0c0c0] pr-px pl-px">
      <svg viewBox="0 0 16 16" className="mr-[2px] size-4" fill="none">{icon}</svg>
      <h2 className="mr-auto pt-[2px] font-['DejaVu_Sans_Condensed','DejaVu_Sans',sans-serif] text-[11px] font-bold text-[#d4cfc8]">Fetzilla_SwordFishy.asc</h2>
      <CaptionButton label="Minimize"><path d="M2 8h5" strokeWidth="2" /></CaptionButton>
      <CaptionButton label="Maximize"><path d="M1.500 1.500h9v8h-9zM1 2h10" /></CaptionButton>
      <CaptionButton label="Close" className="ml-[2px]"><path d="M2 1l8 8M10 1L2 9" strokeWidth="2" /></CaptionButton>
    </div>
    <div className="border-2 border-t-[#505050] border-r-white border-b-white border-l-[#505050]">{children}</div>
  </section>
);

const Field = ({ id, value, off, bold, className }) => (
  <input
    id={id}
    readOnly
    disabled={off}
    value={value}
    className={`h-[19px] border-2 border-t-[#505050] border-r-white border-b-white border-l-[#505050] ${off ? 'bg-[#d4cfc8] pl-[7px] text-[#808080]' : 'bg-white pl-px text-black'} ${bold ? (off ? 'outline-1 -outline-offset-2 outline-[#808080]' : 'outline-1 -outline-offset-2 outline-black') : ''} ${className}`}
  />
);

const CursorGroup = ({ id, title, caption, values, off, ratio }) => (
  <fieldset className={`mx-px border border-[#808080] shadow-[1px_1px_0_#fff] ${off ? 'text-[#808080]' : 'text-black'} ${ratio ? 'mr-[19px] pr-0' : ''}`}>
    <legend className={`h-[14px] bg-[#d4cfc8] px-[2px] text-[11px] leading-[14px] ${off ? '[text-shadow:1px_1px_0_#fff]' : ''} ${ratio ? 'mr-1 ml-auto' : 'ml-1'}`}>{title}</legend>
    <p className={ratio ? 'h-[3px]' : caption ? 'h-[15px] pl-[97px] leading-[9px]' : 'h-[17px]'}>{caption}</p>
    {['Mag:', 'Phase:', 'Group Delay:'].map((label, i) => (
      <div key={label} className="flex h-[21px] items-center pl-[3px]">
        {i === 0 && (
          <>
            <label htmlFor={`${id}-freq`} className="w-[27px]">Freq:</label>
            <Field id={`${id}-freq`} value={values[0]} off={off} className="w-[92px]" />
          </>
        )}
        <label htmlFor={`${id}-${i}`} className="ml-auto pr-[7px]">{label}</label>
        <Field id={`${id}-${i}`} value={values[i + 1]} off={off} bold={i < 2 && !ratio} className={ratio ? 'mr-[2px] w-[91px]' : 'w-[91px]'} />
        {!ratio && (
          <input
            type="radio"
            name="cursor"
            aria-label={`${title} ${label}`}
            disabled={off}
            defaultChecked={id === 'c1' && i === 0}
            className={`mr-[3px] ml-[7px] size-[11px] appearance-none rounded-full border border-t-[#606060] border-r-[#f4f4f4] border-b-[#f4f4f4] border-l-[#606060] checked:bg-[radial-gradient(circle,#000_2px,#fff_3px)] ${off || i === 2 ? 'bg-[#d4cfc8]' : 'bg-white'}`}
          />
        )}
      </div>
    ))}
  </fieldset>
);

const na = ['-- N/A--', '-- N/A--', '-- N/A--', '-- N/A--'];

// floating read-out window, placed freely over the workspace
const CursorDialog = () => (
  <aside className="absolute top-[629px] left-[991px] w-[289px] rounded-t-lg rounded-b-md border border-black bg-[#3a3a3a] px-[3px]">
    <div className="-mx-[3px] flex h-[23px] items-center rounded-t-lg bg-linear-to-b from-[#555] via-[#111] to-[#3c3c3c] pr-[15px] pb-[2px] pl-[33px] font-['DejaVu_Sans',sans-serif] text-[12px] font-bold text-white">
      Fetzilla_SwordFishy.asc
      <button aria-label="Close" className="ml-auto size-[11px] rounded-full border-2 border-[#777]" />
    </div>
    <div className="bg-[#d4cfc8] pb-px font-['Roboto',sans-serif] text-[11px]">
      <CursorGroup id="c1" title="Cursor 1" caption="-V(vout)/I(V5)" values={['100Hz', '-28.5221dB', '-788.236m°', '166.447µs']} />
      <CursorGroup id="c2" title="Cursor 2" values={na} off />
      <CursorGroup id="ratio" title="Ratio (Cursor2 / Cursor1)" values={na} off ratio />
    </div>
    <div className="-mx-[3px] h-1 rounded-b-md bg-[#1088dd]" />
  </aside>
);

const menus = ['File', 'View', 'Plot Settings', 'Simulation', 'Tools', 'Window', 'Help'];

export default function App() {
  return (
    <div className="relative flex min-h-screen flex-col bg-[#d4cfc8] font-['DejaVu_Sans_Condensed','DejaVu_Sans',sans-serif] text-[11px] text-black">
      <TopPanel />
      <div className="flex h-6 items-center border-t border-[#808080] bg-[#3c3c3c] pr-[13px] pb-[2px] pl-[30px] font-['DejaVu_Sans',sans-serif] text-[12px] font-bold text-[#6e6e6e]">
        <h1 className="mr-auto">LTspice IV - Fetzilla_SwordFishy.asc</h1>
        <div className="flex gap-[15px]">
          {['Minimize', 'Maximize', 'Close'].map((n) => (
            <button key={n} aria-label={n} className="size-[11px] rounded-full border-2 border-[#707070]" />
          ))}
        </div>
      </div>

      <nav className="flex h-5 items-center gap-3 border-b border-[#808080] pt-[3px] pl-[6px] text-[10px]">
        {menus.map((m) => (
          <button key={m} className="leading-4"><u>{m[0]}</u>{m.slice(1)}</button>
        ))}
      </nav>

      <Toolbar />

      <div className="flex h-[22px] items-end">
        <span className="h-5 w-[3px] border-b border-white" />
        <button className="h-5 w-[147px] rounded-tl-sm border border-white pt-[3px] pl-[21px]">Fetzilla_SwordFishy.asc</button>
        <button className="h-[22px] w-[151px] rounded-t-sm border-t border-r-2 border-t-white border-r-[#404040] pt-[2px] pl-5">Fetzilla_SwordFishy.asc</button>
        <span className="h-5 flex-1 border-b border-white" />
      </div>

      <main className="mt-[6px] border-t-2 border-l-[3px] border-[#505050] bg-[#d4cfc8] pt-px pr-1 pl-px">
        <ChildWindow
          icon={
            <g shapeRendering="crispEdges">
              <path d="M0 0h16v16H0z" fill="#c0c0c0" />
              <path d="M0 5l4-4 3 4 4-4 4 4" stroke="#00f" />
              <path d="M2 7.500h3M5 8.500h2M9 9.500h2M12 8.500h2" stroke="#f00" />
              <path d="M2 12.500h1M7 12.500h1M12 11.500h1" stroke="#00f" />
              <path d="M0 14.500h16M3 13v3M8 13v3M13 13v3" stroke="#000" />
            </g>
          }
        >
          <Plot />
        </ChildWindow>
        <div className="h-[3px] border-t border-[#505050]" />
        <ChildWindow icon={<path d="M12 1L7 6v4l2 2M9 12h2l1 3" stroke="#000" />}>
          <Schematic />
        </ChildWindow>
      </main>

      <div className="flex flex-1 items-center justify-between border-t border-[#606060] pt-[5px] pr-2 pl-1 shadow-[inset_0_1px_0_#fff]">
        <span className="text-[10px]">Click to manually enter Horizontal Axis Limits</span>
        <span className="font-['Roboto',sans-serif] text-[11px]">Alternate</span>
      </div>
      <div className="h-[3px] bg-[#505050]" />
      <BottomPanel />
      <CursorDialog />
      <svg viewBox="0 0 12 18" className="pointer-events-none absolute top-[597px] left-[1258px] h-[18px] w-3">
        <path d="M0.500 0.500v14l3-3 3 6 2-1-3-6h4z" fill="#000" stroke="#ccc" />
      </svg>
    </div>
  );
}
